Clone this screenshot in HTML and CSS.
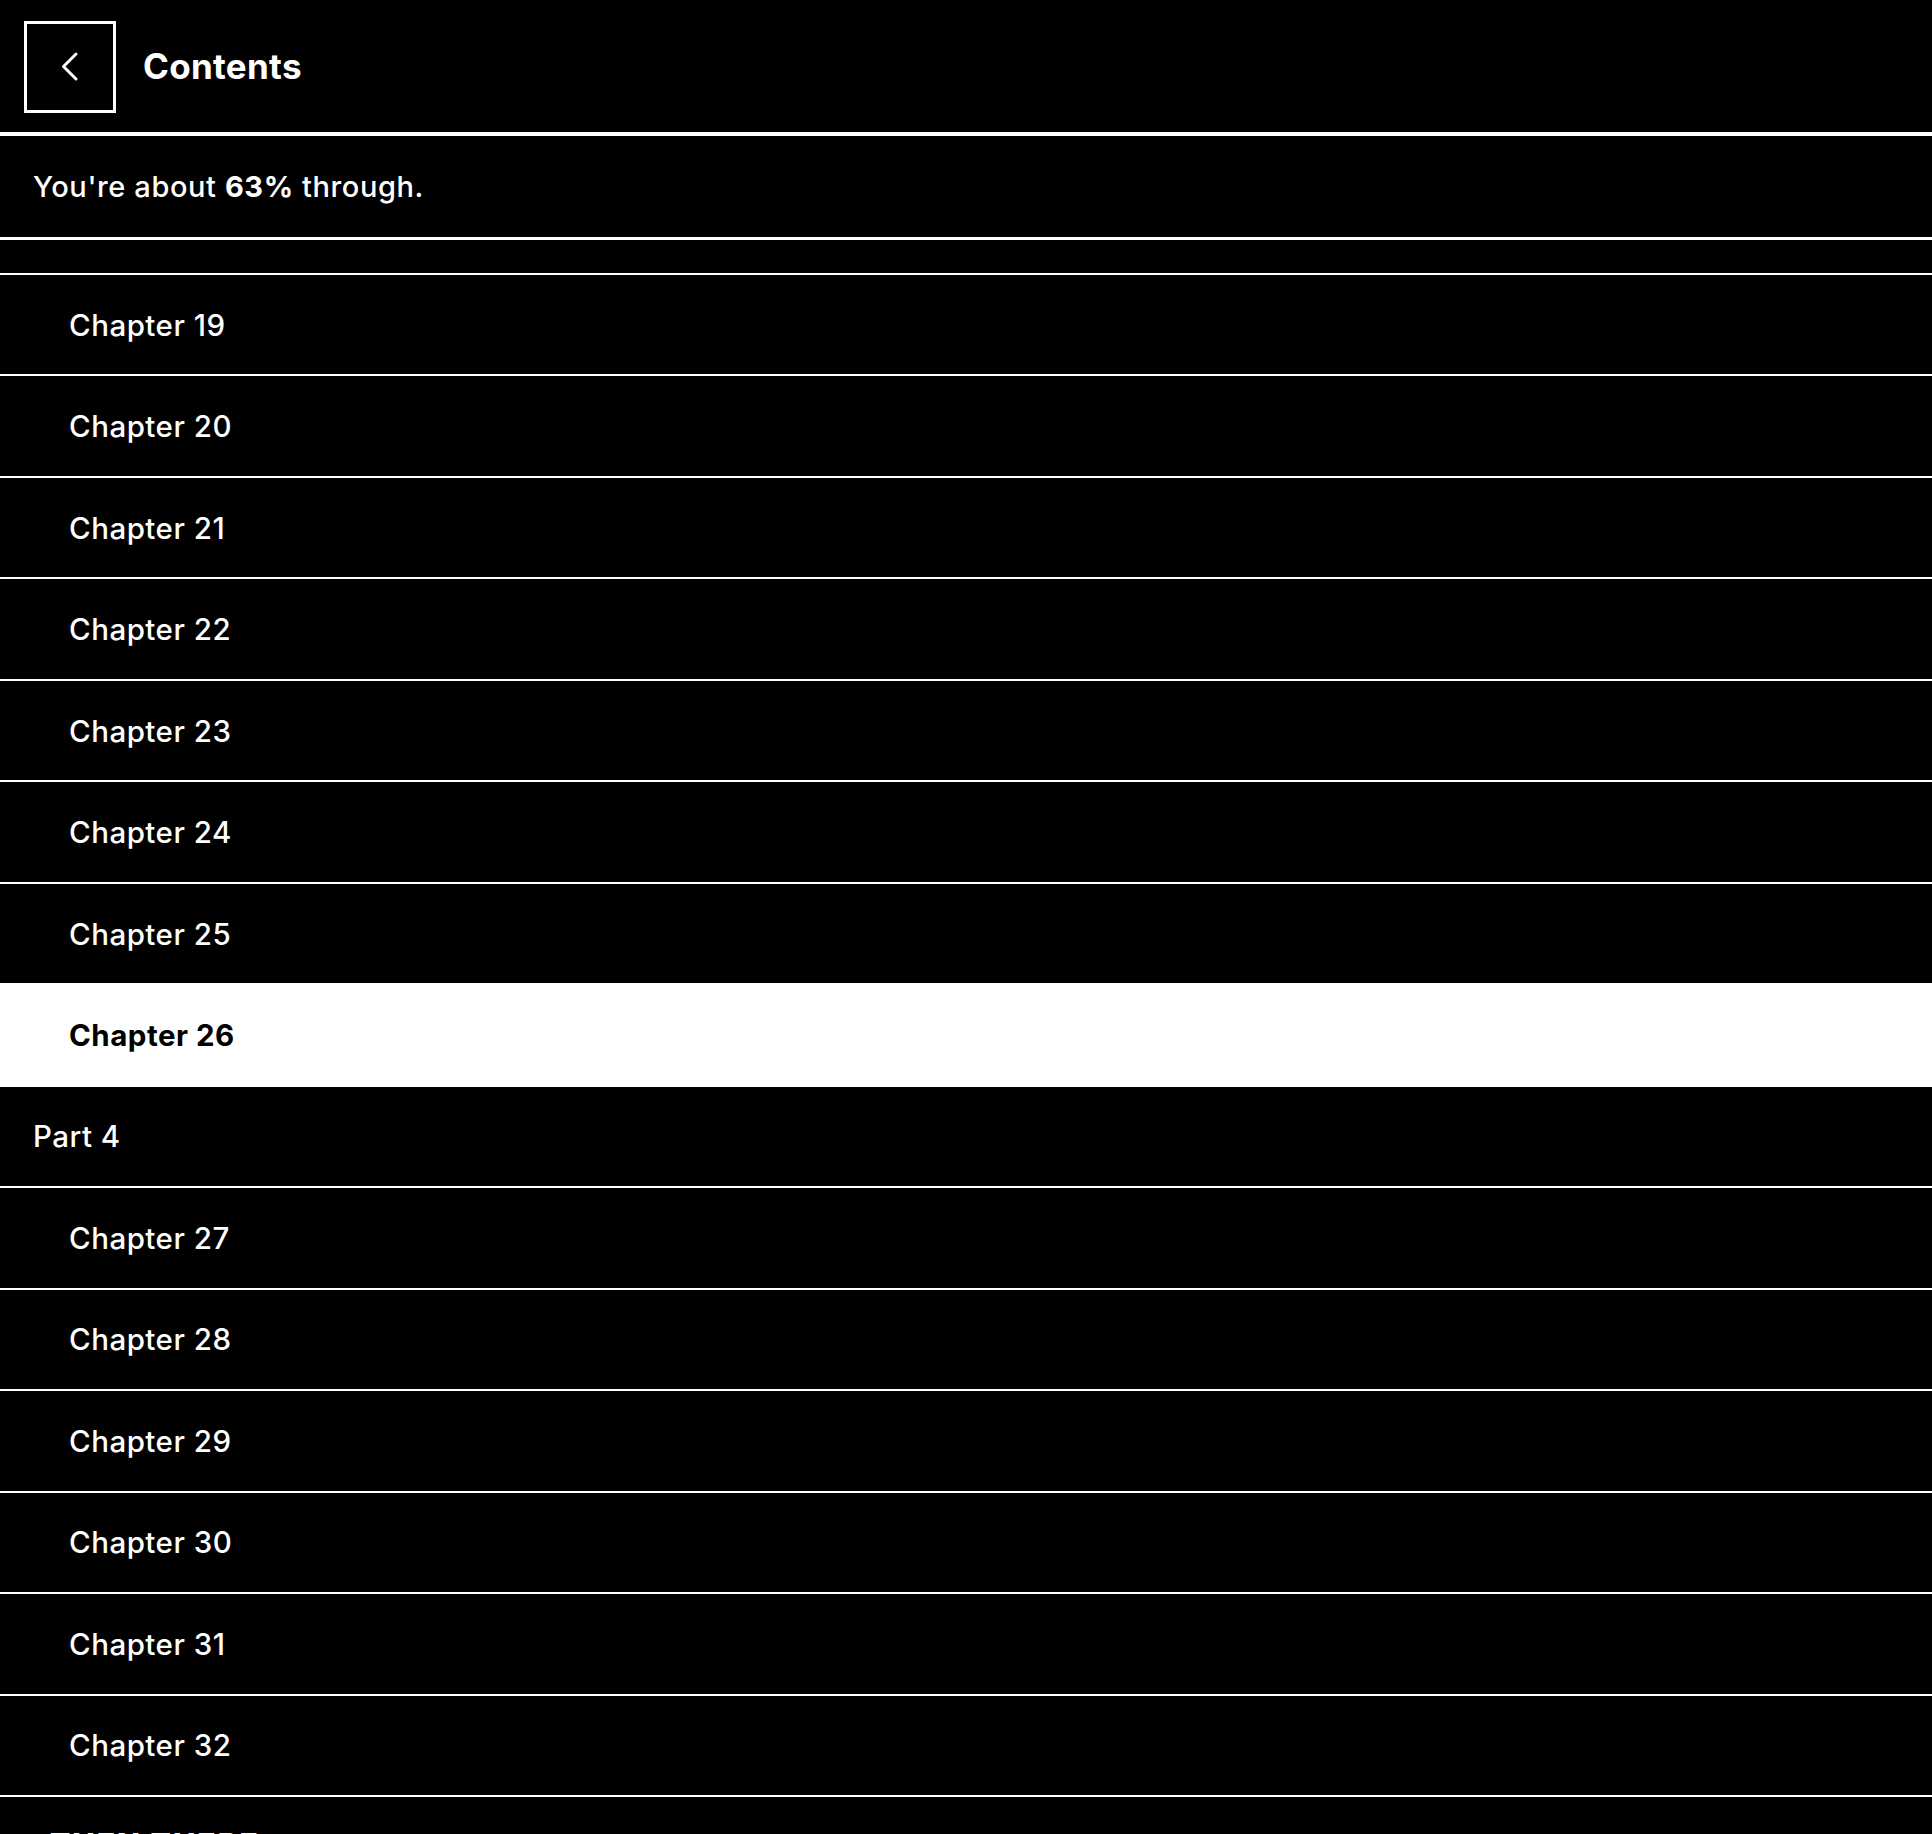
FILE: index.html
```html
<!DOCTYPE html>
<html lang="en">
<head>
  <meta charset="UTF-8">
  <title>Contents</title>
  <link rel="stylesheet" href="styles.css">
</head>
<body>
  <div class="screen">
    <div class="topbar">
      <button class="back-btn" aria-label="Back">
        <svg width="18" height="30" viewBox="0 0 18 30">
          <polyline points="15,2 2.5,14.5 15,27" fill="none" stroke="#fff" stroke-width="2.9" stroke-linecap="round" stroke-linejoin="round"/>
        </svg>
      </button>
      <h1 class="title">Contents</h1>
    </div>

    <div class="progress"><span>You're about <b>63%</b> through.</span></div>
    <div class="spacer"></div>

    <ul class="toc">
      <li class="toc-item chapter">Chapter 19</li>
      <li class="toc-item chapter">Chapter 20</li>
      <li class="toc-item chapter">Chapter 21</li>
      <li class="toc-item chapter">Chapter 22</li>
      <li class="toc-item chapter">Chapter 23</li>
      <li class="toc-item chapter">Chapter 24</li>
      <li class="toc-item chapter">Chapter 25</li>
      <li class="toc-item chapter current">Chapter 26</li>
      <li class="toc-item part">Part 4</li>
      <li class="toc-item chapter">Chapter 27</li>
      <li class="toc-item chapter">Chapter 28</li>
      <li class="toc-item chapter">Chapter 29</li>
      <li class="toc-item chapter">Chapter 30</li>
      <li class="toc-item chapter">Chapter 31</li>
      <li class="toc-item chapter">Chapter 32</li>
      <li class="toc-item extra">THEN THERE</li>
    </ul>
  </div>
</body>
</html>
```

FILE: styles.css
```css
html, body { margin: 0; background: #000; }
body { font-family: Inter, "Noto Sans", sans-serif; color: #fff; overflow: hidden; }
.screen { width: 1932px; height: 1834px; overflow: hidden; }

.topbar { display: flex; align-items: center; height: 132px; padding-left: 24px; border-bottom: 4px solid #fff; box-sizing: content-box; }
.back-btn { width: 92px; height: 92px; margin-top: 2px; background: #000; border: 3px solid #fff; display: flex; align-items: center; justify-content: center; padding: 0; }
.title { margin: 0 0 0 27px; font-size: 35px; font-weight: 700; letter-spacing: 0.3px; }

.progress { height: 101px; display: flex; align-items: center; padding-left: 33px; font-size: 29px; font-weight: 500; letter-spacing: 0.6px; border-bottom: 3px solid #fff; }
.progress b { font-weight: 700; }
.spacer { height: 33px; border-bottom: 2px solid #fff; }

.toc { list-style: none; margin: 0; padding: 0; }
.toc-item { height: 99.47px; display: flex; align-items: center; font-size: 29.5px; font-weight: 500; letter-spacing: 0.5px; border-bottom: 2px solid #fff; }
.chapter { padding-left: 69px; }
.part { padding-left: 33px; }
.current { background: #fff; color: #000; font-weight: 700; }
.extra { padding-left: 50px; align-items: flex-start; padding-top: 29px; height: 70px; font-size: 30px; font-weight: 800; letter-spacing: 2px; }
```
